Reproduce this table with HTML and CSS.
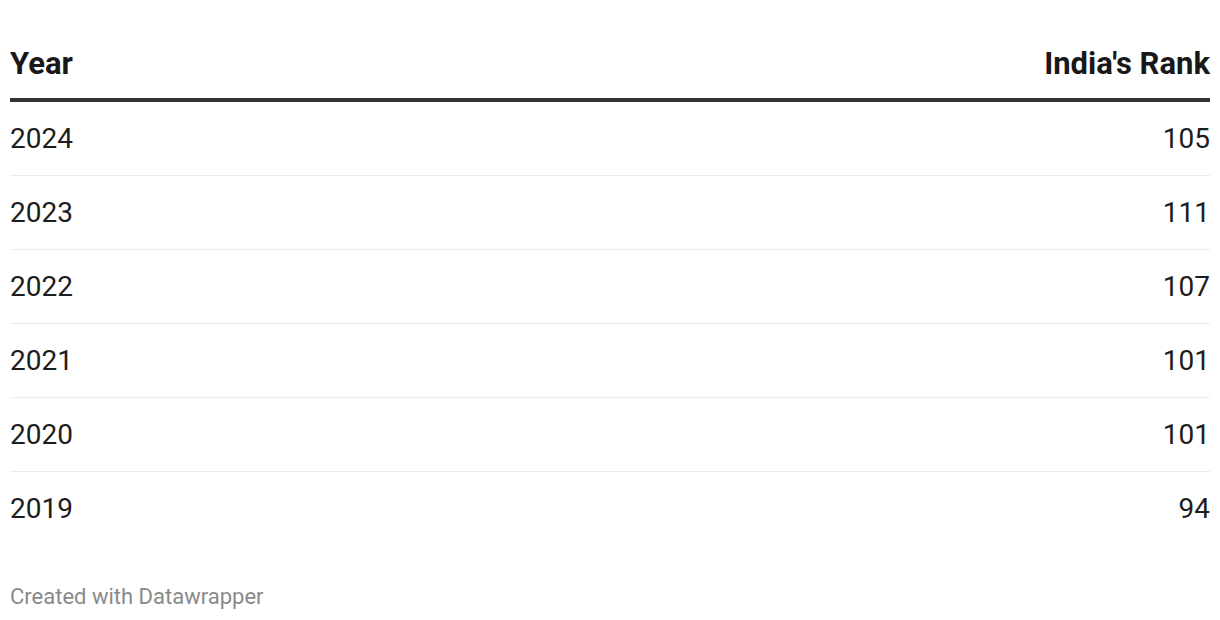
FILE: index.html
```html
<!DOCTYPE html>
<html>
<head>
<meta charset="utf-8">
<link rel="stylesheet" href="styles.css">
</head>
<body>
<div class="chart">
  <table class="rank-table">
    <thead>
      <tr><th class="col-year">Year</th><th class="col-rank">India's Rank</th></tr>
    </thead>
    <tbody>
      <tr><td class="col-year">2024</td><td class="col-rank">105</td></tr>
      <tr><td class="col-year">2023</td><td class="col-rank">111</td></tr>
      <tr><td class="col-year">2022</td><td class="col-rank">107</td></tr>
      <tr><td class="col-year">2021</td><td class="col-rank">101</td></tr>
      <tr><td class="col-year">2020</td><td class="col-rank">101</td></tr>
      <tr class="last"><td class="col-year">2019</td><td class="col-rank">94</td></tr>
    </tbody>
  </table>
  <div class="footer">Created with Datawrapper</div>
</div>
</body>
</html>
```
FILE: styles.css
```css
html, body {
  margin: 0;
  padding: 0;
  background: #ffffff;
}
.chart {
  padding: 0 10px;
  font-family: Roboto, "Liberation Sans", sans-serif;
}
.rank-table {
  width: 100%;
  border-collapse: collapse;
}
.rank-table th {
  font-size: 31px;
  font-weight: 700;
  line-height: 34px;
  color: #181818;
  padding: 47px 0 17px 0;
  border-bottom: 4px solid #333333;
}
.rank-table td {
  font-size: 28px;
  font-weight: 400;
  line-height: 34px;
  color: #1d1d1d;
  height: 73px;
  padding: 0;
  vertical-align: middle;
  border-bottom: 1px solid #ececec;
}
.rank-table tr.last td {
  border-bottom: none;
}
.col-year {
  text-align: left;
}
.col-rank {
  text-align: right;
}
.footer {
  margin-top: 39px;
  font-size: 22px;
  line-height: 26px;
  color: #8a8a8a;
}
```
